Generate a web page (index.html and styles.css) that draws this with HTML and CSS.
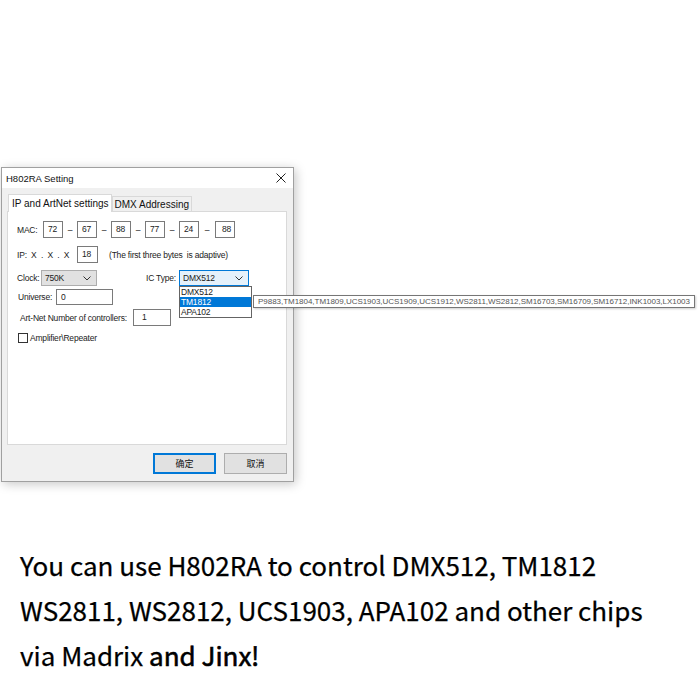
FILE: index.html
```html
<!DOCTYPE html>
<html lang="en">
<head>
<meta charset="UTF-8" />
<meta name="viewport" content="width=device-width, initial-scale=1.0"/>
<title>H802RA Setting</title>
<link rel="stylesheet" href="styles.css">
</head>
<body>

<div class="page">
  <div class="dialog">
    <div class="titlebar">
      <span class="title">H802RA Setting</span>
      <svg class="close" width="10" height="10" viewBox="0 0 10 10">
        <path d="M0.5 0.5 L9.5 9.5 M9.5 0.5 L0.5 9.5" stroke="#222" stroke-width="1" fill="none"/>
      </svg>
    </div>

    <div class="body">
      <div class="tabs">
        <div class="tab active">IP and ArtNet settings</div>
        <div class="tab">DMX Addressing</div>
      </div>

      <div class="panel">
        <div class="row mac-row">
          <span class="label">MAC:</span>
          <span class="box mac">72</span><span class="dash">–</span>
          <span class="box mac">67</span><span class="dash">–</span>
          <span class="box mac">88</span><span class="dash">–</span>
          <span class="box mac">77</span><span class="dash">–</span>
          <span class="box mac">24</span><span class="dash wide">–</span>
          <span class="box mac last">88</span>
        </div>

        <div class="row ip-row">
          <span class="label">IP:&nbsp; X&nbsp; .&nbsp; X&nbsp; .&nbsp; X</span>
          <span class="box ip">18</span>
          <span class="hint">(The first three bytes&nbsp; is adaptive)</span>
        </div>

        <div class="row combo-row">
          <span class="label">Clock:</span>
          <div class="combo clock">
            <span>750K</span>
            <svg width="8" height="5" viewBox="0 0 8 5"><path d="M0.5 0.5 L4 4 L7.5 0.5" stroke="#333" fill="none"/></svg>
          </div>
          <span class="label ic-label">IC Type:</span>
          <div class="combo ic">
            <span>DMX512</span>
            <svg width="8" height="5" viewBox="0 0 8 5"><path d="M0.5 0.5 L4 4 L7.5 0.5" stroke="#333" fill="none"/></svg>
            <ul class="droplist">
              <li>DMX512</li>
              <li class="selected">TM1812</li>
              <li>APA102</li>
            </ul>
            <div class="tooltip">P9883,TM1804,TM1809,UCS1903,UCS1909,UCS1912,WS2811,WS2812,SM16703,SM16709,SM16712,INK1003,LX1003</div>
          </div>
        </div>

        <div class="row universe-row">
          <span class="label">Universe:</span>
          <span class="box universe">0</span>
        </div>

        <div class="row artnet-row">
          <span class="label">Art-Net Number of controllers:</span>
          <span class="box controllers">1</span>
        </div>

        <div class="row check-row">
          <span class="checkbox"></span>
          <span class="label">Amplifier\Repeater</span>
        </div>
      </div>

      <div class="buttons">
        <button class="btn default">确定</button>
        <button class="btn">取消</button>
      </div>
    </div>
  </div>

  <div class="caption">
    <p>You can use H802RA to control DMX512, TM1812</p>
    <p>WS2811, WS2812, UCS1903, APA102 and other chips</p>
    <p>via Madrix <span class="bold">and Jinx!</span></p>
  </div>
</div>

</body>
</html>
```

FILE: styles.css
```css
body {
  margin: 0;
  background-color: #fff;
  font-family: "Liberation Sans", Arial, "Noto Sans CJK SC", sans-serif;
}
.page {
  width: 700px;
  height: 700px;
  padding: 167px 0 0 1px;
  box-sizing: border-box;
}

/* dialog window */
.dialog {
  width: 293px;
  height: 315px;
  box-sizing: border-box;
  border: 1px solid #a0a0a0;
  background-color: #f0f0f0;
  box-shadow: 2px 2px 10px rgba(0,0,0,0.22);
  display: flex;
  flex-direction: column;
}
.titlebar {
  height: 20px;
  background-color: #fff;
  display: flex;
  align-items: center;
  justify-content: space-between;
  padding: 0 7px 0 4px;
  font-size: 9.5px;
  color: #111;
}
.body {
  flex: 1;
  padding: 6px 6px 0 5px;
  display: flex;
  flex-direction: column;
}

/* tabs */
.tabs {
  display: flex;
  align-items: flex-end;
  height: 17px;
  padding-left: 1px;
  font-size: 10px;
  color: #111;
}
.tab {
  border: 1px solid #d9d9d9;
  border-bottom: none;
  background-color: #f0f0f0;
  padding: 1px 2px 0;
  height: 15px;
  box-sizing: border-box;
  line-height: 14px;
}
.tab.active {
  background-color: #fff;
  height: 18px;
  margin-bottom: -1px;
  padding: 2px 2px 0 3px;
  position: relative;
  z-index: 1;
}
.panel {
  height: 234px;
  box-sizing: border-box;
  background-color: #fff;
  border: 1px solid #d9d9d9;
  padding: 9px 0 0 9px;
  font-size: 8.5px;
  letter-spacing: -0.2px;
  color: #222;
}

/* form rows */
.row {
  display: flex;
  align-items: center;
}
.label {
  white-space: nowrap;
}
.box {
  box-sizing: border-box;
  border: 1px solid #7a7a7a;
  background-color: #fff;
  height: 17px;
  line-height: 15px;
  padding-left: 4px;
}
.mac-row .label {
  width: 26px;
}
.mac {
  width: 20px;
}
.mac.last {
  padding-left: 6px;
}
.dash {
  width: 14px;
  text-align: center;
}
.dash.wide {
  width: 16px;
}
.ip-row {
  margin-top: 8px;
}
.ip-row .label {
  width: 60px;
}
.ip {
  width: 21px;
}
.hint {
  margin-left: 11px;
}
.combo-row {
  margin-top: 7px;
}
.combo-row .label {
  width: 24px;
}
.combo {
  box-sizing: border-box;
  height: 16px;
  display: flex;
  align-items: center;
  justify-content: space-between;
  padding: 0 5px 0 3px;
  border: 1px solid #adadad;
  background-color: #e1e1e1;
}
.clock {
  width: 56px;
}
.combo-row .ic-label {
  width: 33px;
  margin-left: 49px;
}
.ic {
  width: 70px;
  position: relative;
  background-color: #e5f1fb;
  border-color: #0078d7;
}
.droplist {
  position: absolute;
  left: -1px;
  top: 15px;
  width: 71px;
  margin: 0;
  padding: 0;
  list-style: none;
  background-color: #fff;
  border: 1px solid #646464;
  z-index: 2;
}
.droplist li {
  height: 10px;
  line-height: 10px;
  padding-left: 1px;
}
.droplist li.selected {
  background-color: #0078d7;
  color: #fff;
}
.tooltip {
  position: absolute;
  left: 73px;
  top: 24px;
  height: 13px;
  line-height: 12px;
  box-sizing: border-box;
  padding: 0 4px;
  border: 1px solid #767676;
  background-color: #fff;
  color: #555;
  font-size: 8px;
  letter-spacing: -0.03px;
  white-space: nowrap;
  box-shadow: 1px 1px 2px rgba(0,0,0,0.2);
  z-index: 3;
}
.universe-row {
  margin-top: 3px;
  padding-left: 1px;
}
.universe-row .label {
  width: 38px;
}
.universe {
  width: 57px;
  height: 16px;
  line-height: 14px;
}
.artnet-row {
  margin-top: 4px;
  padding-left: 3px;
}
.artnet-row .label {
  width: 113px;
}
.controllers {
  width: 38px;
  padding-left: 8px;
}
.check-row {
  margin-top: 7px;
  padding-left: 1px;
}
.checkbox {
  width: 10px;
  height: 10px;
  box-sizing: border-box;
  border: 1px solid #333;
  background-color: #fff;
  margin-right: 2px;
}

/* OK / Cancel */
.buttons {
  display: flex;
  justify-content: flex-end;
  gap: 8px;
  margin-top: 8px;
}
.btn {
  width: 63px;
  height: 21px;
  box-sizing: border-box;
  border: 1px solid #adadad;
  background-color: #e1e1e1;
  font-family: "Noto Sans CJK SC", sans-serif;
  font-size: 9px;
  color: #111;
  padding: 0;
}
.btn.default {
  border: 2px solid #0078d7;
}

/* caption under the dialog */
.caption {
  margin-top: 60px;
  padding-left: 19px;
  font-family: "Noto Sans CJK KR", "Noto Sans", sans-serif;
  font-size: 26px;
  color: #000;
  -webkit-text-stroke: 0.25px #000;
}
.caption p {
  margin: 0;
  height: 45px;
  line-height: 45px;
}
.caption .bold {
  -webkit-text-stroke: 0.6px #000;
}
```
